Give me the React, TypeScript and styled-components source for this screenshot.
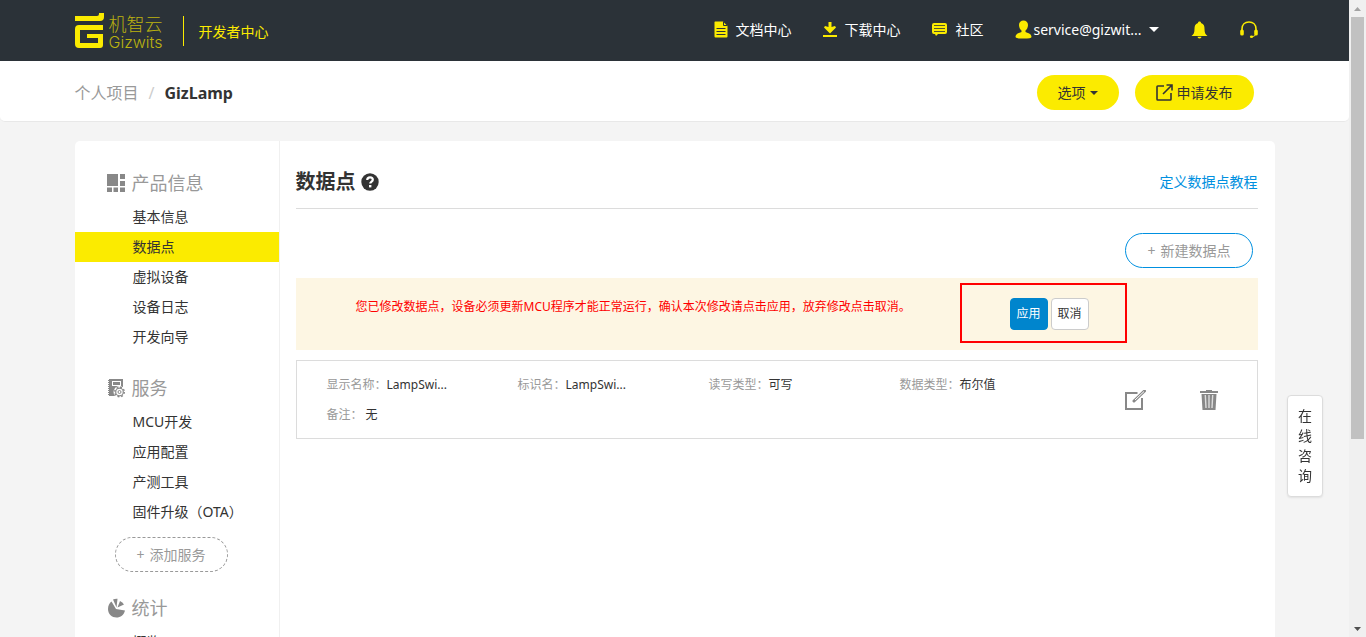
import React from 'react';
import styled, { createGlobalStyle, css } from 'styled-components';

const YELLOW = '#fbeb00';
const DARK = '#2b3238';
const BLUE = '#0090e0';

const GlobalStyle = createGlobalStyle`
  *, *::before, *::after { box-sizing: border-box; }
  html, body { margin: 0; padding: 0; }
  body {
    background: #f4f4f4;
    color: #333;
    font-family: "Noto Sans", "Noto Sans CJK SC", sans-serif;
    font-size: 14px;
    line-height: 20px;
  }
  a { color: inherit; text-decoration: none; }
  button { font: inherit; color: inherit; cursor: pointer; padding: 0; }
  ul, dl, dd, h1, h2, p { margin: 0; padding: 0; }
  ul { list-style: none; }
  svg { display: block; flex: none; }
`;

const Shell = styled.div`
  display: flex;
  height: 100vh;
  overflow: hidden;
`;

const Page = styled.div`
  flex: 1;
  min-width: 0;
  overflow: hidden;
`;

const ScrollTrack = styled.div`
  flex: none;
  width: 17px;
  display: flex;
  flex-direction: column;
  align-items: center;
  background: #f0f0f0;
`;

const ScrollEnd = styled.div`
  height: 17px;
  display: flex;
  align-items: center;
`;

const ScrollRail = styled.div`
  flex: 1;
  width: 13px;
`;

const ScrollThumb = styled.div`
  height: 70%;
  background: #c1c1c1;
`;

const Container = styled.div`
  max-width: 1200px;
  margin: 0 auto;
  display: flex;
  align-items: center;
`;

const TopBar = styled.header`
  background: ${DARK};
`;

const TopBarInner = styled(Container)`
  height: 61px;
  padding-right: 17px;
`;

const Logo = styled.a`
  display: flex;
  align-items: center;
  gap: 5px;
`;

const LogoText = styled.span`
  display: flex;
  flex-direction: column;
  padding-top: 2px;
  color: #bcb20f;
`;

const LogoCn = styled.span`
  font-size: 18px;
  font-weight: 300;
  line-height: 20px;
`;

const LogoEn = styled.span`
  font-family: "Inter", "Liberation Sans", sans-serif;
  font-size: 16px;
  font-weight: 300;
  line-height: 16px;
`;

const DevCenter = styled.a`
  margin-left: 20px;
  padding: 6px 0 4px 15px;
  border-left: 1px solid ${YELLOW};
  color: ${YELLOW};
`;

const Nav = styled.nav`
  margin-left: auto;
  padding-bottom: 2px;
  display: flex;
  align-items: center;
  gap: 32px;
  color: #fff;
`;

const NavLink = styled.a<{ $gap?: number }>`
  display: flex;
  align-items: center;
  gap: ${(p) => p.$gap ?? 7}px;
`;

const Caret = styled.span<{ $size?: number }>`
  border: ${(p) => p.$size ?? 5}px solid transparent;
  border-top-color: currentColor;
  border-bottom: 0;
`;

const SubBar = styled.div`
  background: #fff;
  border-bottom: 1px solid #e8e8e8;
  border-radius: 0 0 5px 5px;
`;

const SubBarInner = styled(Container)`
  height: 60px;
  padding: 3px 21px 0 0;
  gap: 16px;
`;

const Crumbs = styled.nav`
  flex: 1;
  display: flex;
  gap: 10px;
  font-size: 16px;
  color: #999;
`;

const CrumbSlash = styled.span`
  color: #ccc;
`;

const CrumbCurrent = styled.span`
  font-weight: 700;
  color: #333;
`;

const pill = css`
  height: 35px;
  border-radius: 18px;
  padding: 0 21px;
  display: flex;
  align-items: center;
  justify-content: center;
`;

const YellowButton = styled.button`
  ${pill}
  gap: 4px;
  border: 0;
  background: ${YELLOW};
`;

const OutlineButton = styled.button<{ $dashed?: boolean }>`
  ${pill}
  gap: 5px;
  border: 1px ${(p) => (p.$dashed ? 'dashed #999' : `solid ${BLUE}`)};
  background: #fff;
  color: #999;
`;

const Card = styled.div`
  max-width: 1200px;
  min-height: 700px;
  margin: 19px auto 0;
  display: flex;
  background: #fff;
  border-radius: 5px;
`;

const Sidebar = styled.aside`
  flex: none;
  width: 205px;
  padding-top: 23px;
  border-right: 1px solid #f0f0f0;
`;

const Section = styled.section`
  margin-bottom: 17px;
`;

const SectionTitle = styled.h2`
  display: flex;
  align-items: center;
  gap: 6px;
  height: 38px;
  padding-left: 32px;
  font-size: 18px;
  font-weight: 400;
  color: #999;
`;

const MenuLink = styled.a<{ $active?: boolean }>`
  display: block;
  padding-left: 58px;
  line-height: 30px;
  background: ${(p) => (p.$active ? YELLOW : 'transparent')};
`;

const AddService = styled.div`
  display: flex;
  padding: 10px 0 0 40px;
`;

const Main = styled.main`
  flex: 1;
  min-width: 0;
  padding: 23px 17px 0 16px;
`;

const TitleRow = styled.div`
  display: flex;
  align-items: center;
  justify-content: space-between;
  height: 45px;
  padding-bottom: 8px;
  border-bottom: 1px solid #dcdcdc;
`;

const Title = styled.h1`
  display: flex;
  align-items: center;
  gap: 5px;
  font-size: 20px;
  font-weight: 700;
`;

const HelpLink = styled.a`
  color: ${BLUE};
`;

const Toolbar = styled.div`
  display: flex;
  justify-content: flex-end;
  padding: 24px 5px 10px;
`;

const Notice = styled.div`
  display: flex;
  align-items: flex-start;
  height: 72px;
  padding: 5px 131px 0 60px;
  background: #fdf6e3;
`;

const NoticeText = styled.p`
  flex: 1;
  padding-top: 14px;
  font-size: 12px;
  color: #f00;
`;

const NoticeActions = styled.div`
  display: flex;
  gap: 3px;
  width: 167px;
  height: 60px;
  padding: 13px 0 0 48px;
  border: 2px solid #f00;
`;

const SmallButton = styled.button<{ $primary?: boolean }>`
  width: 38px;
  height: 32px;
  border: 1px solid ${(p) => (p.$primary ? '#0085cd' : '#ccc')};
  border-radius: 4px;
  background: ${(p) => (p.$primary ? '#0085cd' : '#fff')};
  color: ${(p) => (p.$primary ? '#fff' : '#333')};
  font-size: 12px;
`;

const PointCard = styled.div`
  display: flex;
  align-items: center;
  margin-top: 10px;
  padding: 9px 39px 8px 30px;
  border: 1px solid #dcdcdc;
`;

const Fields = styled.dl`
  flex: none;
  width: 764px;
  display: grid;
  grid-template-columns: repeat(4, 1fr);
  font-size: 12px;
  line-height: 30px;
`;

const Field = styled.div`
  display: flex;
  dt { color: #999; }
`;

const Spaced = styled.dd`
  padding-left: 3px;
`;

const PointActions = styled.div`
  flex: 1;
  display: flex;
  justify-content: flex-end;
  gap: 54px;
`;

const IconButton = styled.button`
  border: 0;
  background: none;
`;

const Consult = styled.button`
  position: fixed;
  top: 395px;
  right: 43px;
  width: 36px;
  padding: 10px;
  border: 1px solid #dcdcdc;
  border-radius: 4px;
  background: #fff;
  box-shadow: 0 1px 2px rgba(0, 0, 0, 0.08);
`;

const LogoMark = () => (
  <svg width="29" height="36" viewBox="0 0 29 36" fill={YELLOW} aria-hidden="true">
    <path d="M0 3H22Q24 3 24 1V0H29V4Q29 8 25 8H0Z" />
    <path d="M4 12H28V17H5V30H23V25H12V21H28V32Q28 35 25 35H4Q0 35 0 31V16Q0 12 4 12Z" />
  </svg>
);

const DocIcon = () => (
  <svg width="14" height="17" viewBox="0 0 14 17" aria-hidden="true">
    <path d="M1 0.500H9L13.500 5V15.500Q13.500 16.500 12.500 16.500H1.500Q0.500 16.500 0.500 15.500V1Z" fill={YELLOW} />
    <path d="M9.500 1V4.500H13M2.500 7.500H11.500M2.500 10.500H11.500M2.500 13.500H11.500" stroke={DARK} fill="none" />
  </svg>
);

const DownloadIcon = () => (
  <svg width="14" height="15" viewBox="0 0 14 15" fill={YELLOW} aria-hidden="true">
    <path d="M5.500 0H8.500V5L12 4L13 5.500L7 11.500L1 5.500L2 4L5.500 5ZM0 13H14V15H0Z" />
  </svg>
);

const ChatIcon = () => (
  <svg width="16" height="13" viewBox="0 0 16 13" aria-hidden="true">
    <path d="M2 0H13Q15 0 15 2V9Q15 11 13 11H6L4 13L3 11H2Q0 11 0 9V2Q0 0 2 0Z" fill={YELLOW} />
    <path d="M2 2.500H13M2 5.500H13M2 8.500H13" stroke={DARK} strokeOpacity="0.800" />
  </svg>
);

const UserIcon = () => (
  <svg width="17" height="19" viewBox="0 0 17 19" fill={YELLOW} aria-hidden="true">
    <path d="M8.500 0.500C11 0.500 13 2 13 5C13 7 12 9.500 10.500 10.500V12C12 13 16.500 13.200 16.500 17Q16.500 18.500 8.500 18.500Q0.500 18.500 0.500 17C0.500 13.200 5 13 6.500 12V10.500C5 9.500 4 7 4 5C4 2 6 0.500 8.500 0.500Z" />
  </svg>
);

const BellIcon = () => (
  <svg width="17" height="18" viewBox="0 0 17 18" fill={YELLOW} aria-hidden="true">
    <path d="M8.500 0.500C9.500 0.500 10 1 10 2C13 3 13.500 5 13.500 8C13.500 12 14.500 13.500 16.500 15H0.500C2.500 13.500 3.500 12 3.500 8C3.500 5 4 3 7 2C7 1 7.500 0.500 8.500 0.500Z" />
    <path d="M6.500 15.800H10.500Q10.500 17.500 8.500 17.500Q6.500 17.500 6.500 15.800Z" />
  </svg>
);

const HeadsetIcon = () => (
  <svg width="18" height="17" viewBox="0 0 18 17" aria-hidden="true">
    <path d="M2 10V8C2 3.500 5 1 9 1S16 3.500 16 8V10" fill="none" stroke={YELLOW} strokeWidth="1.600" />
    <rect x="0.200" y="8.500" width="3.600" height="6" rx="1.600" fill={YELLOW} />
    <rect x="14.200" y="8.500" width="3.600" height="6" rx="1.600" fill={YELLOW} />
    <path d="M15.500 14Q14 15.600 12 15.700" fill="none" stroke={YELLOW} />
    <ellipse cx="11.500" cy="15.700" rx="1.600" ry="1.200" fill={YELLOW} />
  </svg>
);

const ShareIcon = () => (
  <svg width="17" height="17" viewBox="0 0 17 17" fill="none" stroke="#333" strokeWidth="1.600" aria-hidden="true">
    <path d="M8 2H1.800Q1 2 1 2.800V15.200Q1 16 1.800 16H14.200Q15 16 15 15.200V9" />
    <path d="M10.500 1H16V6.500M15.500 1.500L7 10" />
  </svg>
);

const GridIcon = () => (
  <svg width="19" height="18" viewBox="0 0 19 18" fill="#888" aria-hidden="true">
    <path d="M0 0H11V12H0ZM13 0H18V5H13ZM13 7H18V12H13ZM0 13.500H5V18H0ZM6.500 13.500H11V18H6.500ZM13 13.500H18V18H13Z" />
  </svg>
);

const ServiceIcon = () => (
  <svg width="19" height="20" viewBox="0 0 19 20" aria-hidden="true">
    <path d="M2 1H16V9H9V18H2Z" fill="#888" />
    <path d="M1.500 2V18" stroke="#888" strokeWidth="1" strokeDasharray="1 1" />
    <rect x="5.500" y="3.500" width="8" height="4" fill="none" stroke="#fff" />
    <circle cx="12.500" cy="14" r="6" fill="#fff" />
    <circle cx="12.500" cy="14" r="4.800" fill="none" stroke="#888" strokeWidth="1.400" strokeDasharray="1.900 1.870" />
    <circle cx="12.500" cy="14" r="3.800" fill="none" stroke="#888" strokeWidth="1.200" />
    <circle cx="12.500" cy="14" r="1.500" fill="none" stroke="#888" />
  </svg>
);

const PieIcon = () => (
  <svg width="19" height="20" viewBox="0 0 19 20" fill="#888" aria-hidden="true">
    <path d="M9 11L4.500 3.500C2.500 5 1 7.500 1 11C1 16 5 19.500 9.500 19.500C13.500 19.500 17 17 18 12.500Z" />
    <path d="M9.500 9.500L6 1.500Q8 0.500 10.500 0.700Z" />
    <path d="M10.500 9.500L13 3Q15.500 4 17 6.500Z" />
  </svg>
);

const HelpIcon = () => (
  <svg width="18" height="18" viewBox="0 0 18 18" aria-hidden="true">
    <circle cx="9" cy="9" r="8.700" fill="#333" />
    <path d="M6.200 7C6.300 5.200 7.400 4.300 9 4.300C10.700 4.300 11.800 5.300 11.800 6.700C11.800 8.500 9.200 8.600 9.200 10.600" fill="none" stroke="#fff" strokeWidth="2.200" />
    <rect x="8" y="12" width="2.400" height="2.400" fill="#fff" />
  </svg>
);

const EditIcon = () => (
  <svg width="21" height="20" viewBox="0 0 21 20" fill="none" aria-hidden="true">
    <path d="M12.500 3H1V19H17V8" stroke="#888" strokeWidth="2" />
    <path d="M9 11L19.500 1" stroke="#888" strokeWidth="3" strokeLinecap="round" />
    <path d="M10 10L19 1.500" stroke="#fff" strokeWidth="1" />
  </svg>
);

const TrashIcon = () => (
  <svg width="18" height="20" viewBox="0 0 18 20" aria-hidden="true">
    <path d="M0 1H6V0H12V1H18V3H0ZM1.500 4H16.500L15.500 20H2.500Z" fill="#888" />
    <path d="M5.300 5L6 18M9 5V18M12.700 5L12 18" stroke="#ddd" strokeWidth="1.400" />
  </svg>
);

const ArrowIcon = ({ down }: { down?: boolean }) => (
  <svg width="7" height="4" viewBox="0 0 7 4" fill={down ? '#505050' : '#a3a3a3'} aria-hidden="true">
    <path d={down ? 'M0 0H7L3.500 4Z' : 'M0 4H7L3.500 0Z'} />
  </svg>
);

const sections = [
  { title: '产品信息', icon: <GridIcon />, items: ['基本信息', '数据点', '虚拟设备', '设备日志', '开发向导'] },
  { title: '服务', icon: <ServiceIcon />, items: ['MCU开发', '应用配置', '产测工具', '固件升级（OTA）'], add: true },
  { title: '统计', icon: <PieIcon />, items: ['概览'] },
];

const fields = [
  ['显示名称：', 'LampSwi...'],
  ['标识名：', 'LampSwi...'],
  ['读写类型：', '可写'],
  ['数据类型：', '布尔值'],
];

export default function App() {
  return (
    <>
      <GlobalStyle />
      <Shell>
        <Page>
          <TopBar>
            <TopBarInner>
              <Logo href="#">
                <LogoMark />
                <LogoText>
                  <LogoCn>机智云</LogoCn>
                  <LogoEn>Gizwits</LogoEn>
                </LogoText>
              </Logo>
              <DevCenter href="#">开发者中心</DevCenter>
              <Nav>
                <NavLink href="#"><DocIcon />文档中心</NavLink>
                <NavLink href="#"><DownloadIcon />下载中心</NavLink>
                <NavLink href="#"><ChatIcon />社区</NavLink>
                <NavLink href="#" $gap={1}>
                  <UserIcon />
                  <NavLink as="span">service@gizwit...<Caret /></NavLink>
                </NavLink>
                <NavLink href="#" aria-label="通知"><BellIcon /></NavLink>
                <NavLink href="#" aria-label="客服"><HeadsetIcon /></NavLink>
              </Nav>
            </TopBarInner>
          </TopBar>
          <SubBar>
            <SubBarInner>
              <Crumbs>
                <a href="#">个人项目</a>
                <CrumbSlash>/</CrumbSlash>
                <CrumbCurrent>GizLamp</CrumbCurrent>
              </Crumbs>
              <YellowButton>选项<Caret $size={4} /></YellowButton>
              <YellowButton><ShareIcon />申请发布</YellowButton>
            </SubBarInner>
          </SubBar>
          <Card>
            <Sidebar>
              {sections.map((s) => (
                <Section key={s.title}>
                  <SectionTitle>{s.icon}{s.title}</SectionTitle>
                  <ul>
                    {s.items.map((item) => (
                      <li key={item}>
                        <MenuLink href="#" $active={item === '数据点'}>{item}</MenuLink>
                      </li>
                    ))}
                  </ul>
                  {s.add && (
                    <AddService>
                      <OutlineButton $dashed><span>+</span>添加服务</OutlineButton>
                    </AddService>
                  )}
                </Section>
              ))}
            </Sidebar>
            <Main>
              <TitleRow>
                <Title>数据点<HelpIcon /></Title>
                <HelpLink href="#">定义数据点教程</HelpLink>
              </TitleRow>
              <Toolbar>
                <OutlineButton><span>+</span>新建数据点</OutlineButton>
              </Toolbar>
              <Notice>
                <NoticeText>您已修改数据点，设备必须更新MCU程序才能正常运行，确认本次修改请点击应用，放弃修改点击取消。</NoticeText>
                <NoticeActions>
                  <SmallButton $primary>应用</SmallButton>
                  <SmallButton>取消</SmallButton>
                </NoticeActions>
              </Notice>
              <PointCard>
                <Fields>
                  {fields.map(([label, value]) => (
                    <Field key={label}>
                      <dt>{label}</dt>
                      <dd>{value}</dd>
                    </Field>
                  ))}
                  <Field>
                    <dt>备注：</dt>
                    <Spaced>无</Spaced>
                  </Field>
                </Fields>
                <PointActions>
                  <IconButton aria-label="编辑"><EditIcon /></IconButton>
                  <IconButton aria-label="删除"><TrashIcon /></IconButton>
                </PointActions>
              </PointCard>
            </Main>
          </Card>
        </Page>
        <ScrollTrack>
          <ScrollEnd><ArrowIcon /></ScrollEnd>
          <ScrollRail><ScrollThumb /></ScrollRail>
          <ScrollEnd><ArrowIcon down /></ScrollEnd>
        </ScrollTrack>
      </Shell>
      <Consult>在线咨询</Consult>
    </>
  );
}
